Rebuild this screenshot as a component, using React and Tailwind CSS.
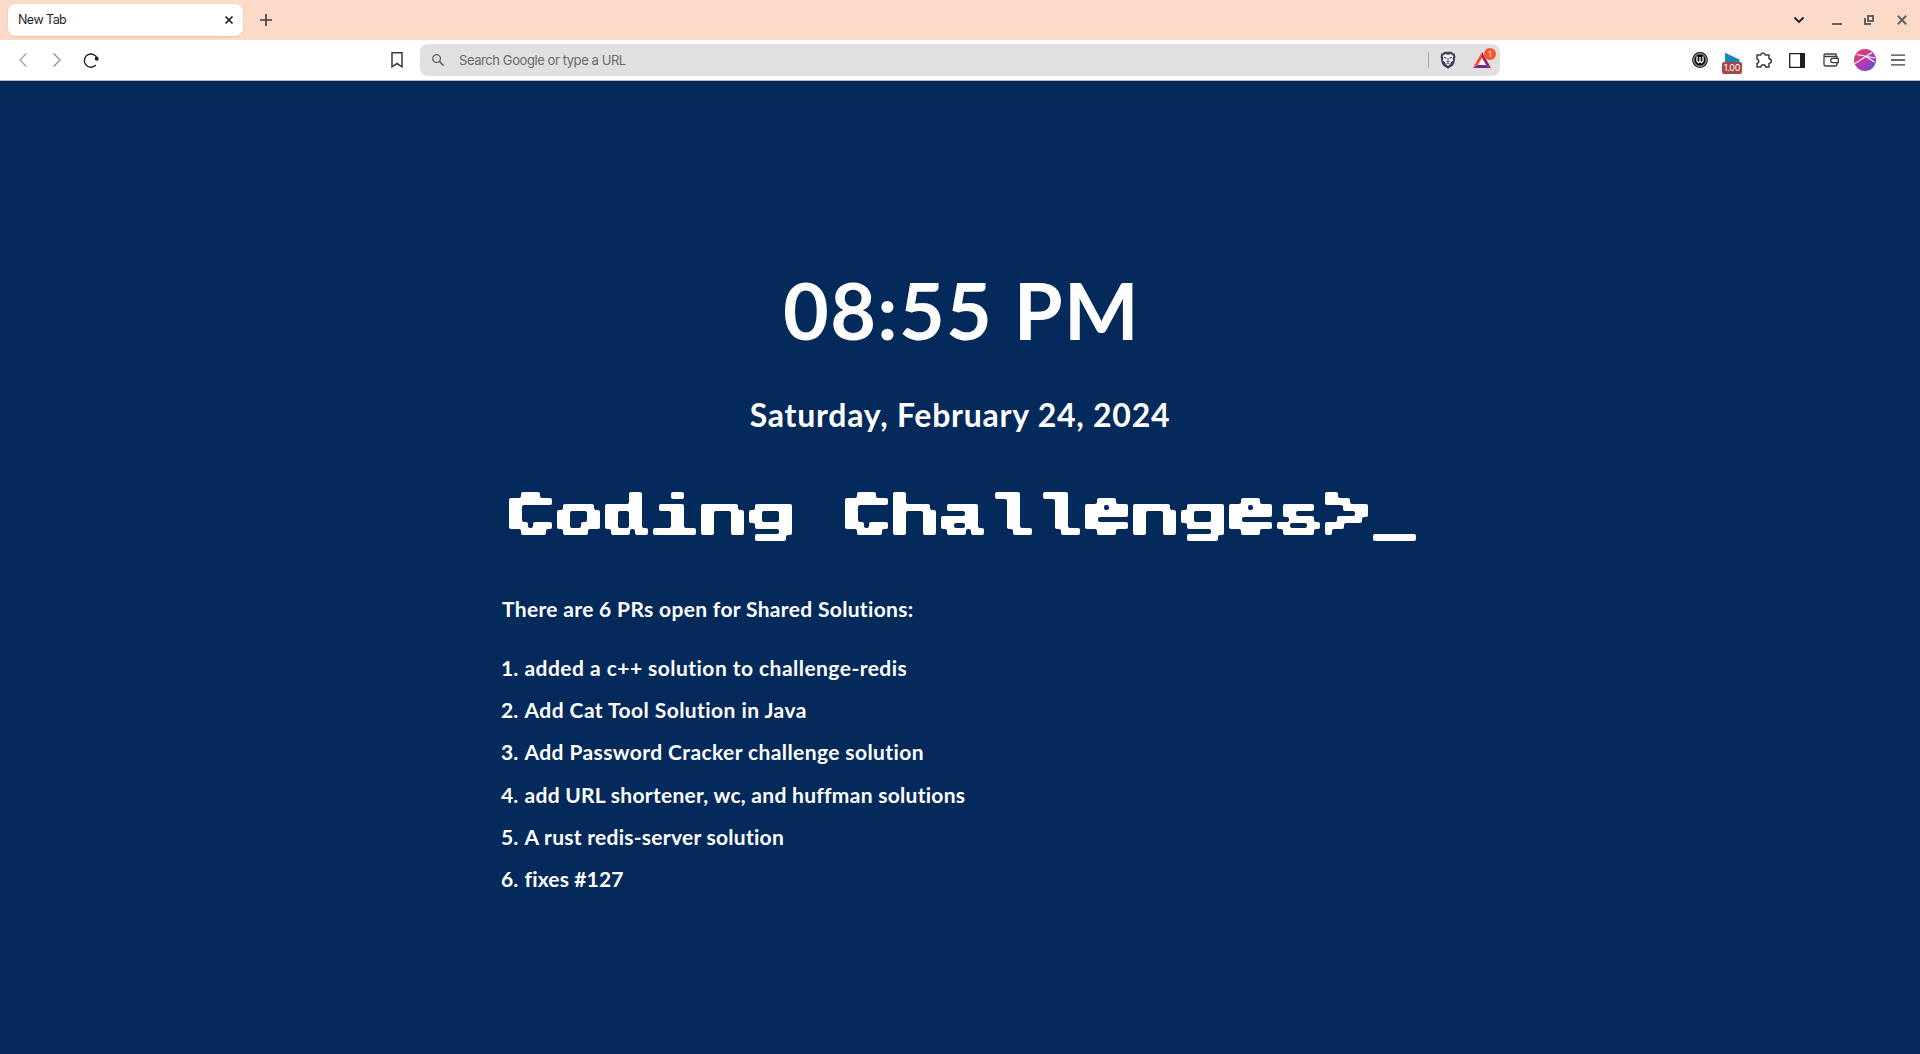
import React from "react";

const LINES = [
  ["added a c++ solution to challenge-redis", "tracking-[0.46px]"],
  ["Add Cat Tool Solution in Java", "tracking-[0.44px]"],
  ["Add Password Cracker challenge solution", "tracking-[0.4px]"],
  ["add URL shortener, wc, and huffman solutions", "tracking-[0.28px]"],
  ["A rust redis-server solution", "tracking-[0.27px]"],
  ["fixes #127", "tracking-[0.15px]"],
];

// Per-character adjustments that keep the bitmap rendering of the title crisp.
const GLYPH_STYLES = {
  e: "inline-block -translate-y-[2px] text-[58px] leading-none tracking-[0px] [-webkit-text-stroke:2px_white]",
  s: "inline-block [-webkit-text-stroke:0px_white]",
  g: "inline-block origin-[50%_40%] scale-y-[0.88]",
  ">": "inline-block -translate-y-px scale-y-[1.3] [-webkit-text-stroke:0px_white]",
  _: "inline-block scale-x-[0.84]",
};

function Icon({ w = 20, h = 20, className = "", children }) {
  return (
    <svg width={w} height={h} viewBox={`0 0 ${w} ${h}`} fill="none" className={"shrink-0 " + className}>
      {children}
    </svg>
  );
}

function TabStrip() {
  return (
    <div className="flex h-10 items-center bg-[#fcdac8] pl-2">
      <div className="flex h-8 w-[235px] items-center justify-between rounded-lg bg-white pr-[9px] pl-[10px] shadow-[0_1px_2px_rgba(120,60,30,0.15)]">
        <span className="pt-px text-[12.5px] tracking-[-0.55px] text-[#1d1f25]">New Tab</span>
        <Icon w={10} h={10} className="text-[#1d1f25]">
          <path d="M1.5 1.5l7 7M8.5 1.5l-7 7" stroke="currentColor" strokeWidth="1.7" />
        </Icon>
      </div>
      <Icon w={14} h={14} className="ml-4">
        <path d="M7 1v12M1 7h12" stroke="#3b3b42" strokeWidth="1.6" />
      </Icon>
      <div className="ml-auto flex items-center pr-[13px]">
        <Icon w={12} h={12} className="mr-[27px]">
          <path d="M1.5 3.5L6 8l4.5-4.5" stroke="#1d1f25" strokeWidth="1.8" />
        </Icon>
        <Icon w={10} h={12} className="mr-[22px]">
          <path d="M0 10h10" stroke="#636161" strokeWidth="2" />
        </Icon>
        <Icon w={10} h={10} className="mr-[23px]">
          <path d="M4 1h5v5H4zM1 3v6h6" stroke="#636161" strokeWidth="2" />
        </Icon>
        <Icon w={10} h={10}>
          <path d="M.8.8l8.4 8.4M9.2.8L.8 9.2" stroke="#636161" strokeWidth="2" />
        </Icon>
      </div>
    </div>
  );
}

function Toolbar() {
  return (
    <div className="flex h-[41px] items-center border-b border-[#bcc0bd] bg-white">
      <Icon w={8} h={14} className="ml-[19px]">
        <path d="M7.3.5L1 7l6.3 6.5" stroke="#a3a3a6" strokeWidth="1.3" />
      </Icon>
      <Icon w={8} h={14} className="ml-[26px]">
        <path d="M.7.5L7 7 .7 13.5" stroke="#8f8f93" strokeWidth="1.3" />
      </Icon>
      <Icon w={17} h={17} className="ml-[22px]">
        <path d="M12.8 13.100a6.600 6.600 0 1 1 1.500-6.300" stroke="#1d1f25" strokeWidth="1.400" />
        <circle cx="13.700" cy="6.800" r="2" fill="#1d1f25" />
      </Icon>
      <Icon w={12} h={16} className="ml-[291px]">
        <path d="M1 .8h10v14l-5-3.3-5 3.3z" stroke="#3b3b42" strokeWidth="1.5" />
      </Icon>
      <div className="ml-[17px] flex h-8 w-[1080px] items-center rounded-lg bg-[#e0e0e0] pr-[4px] pl-3">
        <Icon w={12} h={12}>
          <circle cx="4.6" cy="4.6" r="3.9" stroke="#5f6064" strokeWidth="1.3" />
          <path d="M7.4 7.4l4.3 4.3" stroke="#5f6064" strokeWidth="1.5" />
        </Icon>
        <span className="ml-[15px] pt-px text-[13px] tracking-[-0.42px] text-[#68696d]">Search Google or type a URL</span>
        <div className="ml-auto h-4 w-px bg-[#ababad]" />
        <Icon w={16} h={18} className="ml-[11px]">
          <path d="M4.5.8h7l1.6 1.4 1.5.4.8 3-1 6.2L13 14.500l-5 3.300-5-3.300-1.400-2.700L.6 5.600l.8-3 1.500-.4z" fill="#3f4158" />
          <path d="M5 3l3 .7L11 3l2.300 2-.5 2.500.3 2-2 1.500-.8 2.200L8 14.700l-2.300-1.500L4.900 11l-2-1.500.3-2L2.700 5z" fill="#f2f2f2" />
          <path d="M4 6.300l2.700.8M12 6.300l-2.700.8M8 7v3M6.300 10.200L8 11l1.700-.8M6.300 12.800L8 12l1.700.8" stroke="#3f4158" strokeWidth=".9" />
        </Icon>
        <div className="relative ml-[17px] h-[22px] w-[23px]">
          <Icon w={18} h={16} className="absolute top-[3px] left-0">
            <path d="M9 0L0 16l5.200-3L9 6z" fill="#ff4724" />
            <path d="M9 0l9 16-5.200-3L9 6z" fill="#9e1f63" />
            <path d="M0 16h18l-5.200-3H5.200z" fill="#662d91" />
            <path d="M9 6l4 7H5z" fill="#fff" />
          </Icon>
          <span className="absolute -top-px right-0 flex size-3 items-center justify-center rounded-full bg-[#fb542b] text-[8px] text-white">1</span>
        </div>
      </div>
      <div className="ml-auto flex items-center pr-[15px]">
        <Icon w={16} h={16} className="mr-[14px]">
          <circle cx="8" cy="8" r="7.900" fill="#111" />
          <circle cx="8" cy="8" r="6.300" stroke="#ddd" strokeWidth=".9" />
          <path d="M5 4.500v4.800l1.500 1.400L8 9.300l1.500 1.400L11 9.300V4.500M8 5v4.500" stroke="#fff" strokeWidth="1.300" />
        </Icon>
        <div className="relative mr-[13px] h-[22px] w-5">
          <Icon w={16} h={11} className="absolute top-[3px] left-[3px]">
            <path d="M0 .8l14.500 6.700V10H0z" fill="#1188b8" />
          </Icon>
          <span className="absolute top-[12.5px] left-0 flex h-3 w-5 items-center justify-center rounded-[2px] bg-[#a94646] text-[9px] tracking-[-0.2px] text-white">1.00</span>
        </div>
        <Icon w={18} h={18} className="mr-[16px]">
          <path d="M2 4h3.600a2.400 2.400 0 0 1 4.700 0H14v3.800a2.300 2.300 0 0 1 0 4.600V16h-3.500a2.300 2.300 0 0 0-4.600 0H2v-3.600a2.300 2.300 0 0 0 0-4.500z" stroke="#3b3b42" strokeWidth="1.500" strokeLinejoin="round" />
        </Icon>
        <Icon w={16} h={15} className="mr-[18px]">
          <path d="M.7.7h14.600v13.600H.7z" stroke="#1d1f25" strokeWidth="1.300" />
          <path d="M11 0h5v15h-5z" fill="#1d1f25" />
        </Icon>
        <Icon w={16} h={14} className="mr-[15px]">
          <path d="M1 3.500V11q0 2 2 2h9q2 0 2-2v-1M14 5.500v-2H2.500Q1 3.500 1 2.200T2.500 1H13v2.500" stroke="#3b3b42" strokeWidth="1.300" />
          <path d="M15.300 5.300h-5.500a2.200 2.200 0 0 0 0 4.400h5.500z" stroke="#3b3b42" strokeWidth="1.300" />
        </Icon>
        <Icon w={22} h={22} className="mr-[15px]">
          <defs>
            <linearGradient id="avatar" x1="0" y1="0" x2="1" y2="1">
              <stop offset=".15" stopColor="#e93c70" />
              <stop offset=".55" stopColor="#b23bb0" />
              <stop offset="1" stopColor="#4b55d8" />
            </linearGradient>
          </defs>
          <circle cx="11" cy="11" r="11" fill="url(#avatar)" />
          <path d="M1 14.500L18 3.500M3 5.500L21 9M12 7.500L20.500 13" stroke="#fff" strokeWidth="1.100" />
        </Icon>
        <Icon w={14} h={12}>
          <path d="M0 1.200h14M0 6h14M0 10.800h14" stroke="#3b3b42" strokeWidth="1.300" />
        </Icon>
      </div>
    </div>
  );
}

export default function App() {
  return (
    <div className="flex h-screen flex-col overflow-hidden bg-[#042a5c] font-['Inter',sans-serif]">
      <TabStrip />
      <Toolbar />
      <svg width="0" height="0" className="absolute">
        <filter id="pixelate" x="0" y="0" width="924" height="96" filterUnits="userSpaceOnUse" colorInterpolationFilters="sRGB">
          <feFlood x="3" y="3" width="1" height="1" floodColor="#fff" />
          <feComposite width="6" height="6" />
          <feTile result="grid" />
          <feComposite in="SourceGraphic" in2="grid" operator="in" />
          <feComponentTransfer>
            <feFuncR type="discrete" tableValues="1 1" />
            <feFuncG type="discrete" tableValues="1 1" />
            <feFuncB type="discrete" tableValues="1 1" />
            <feFuncA type="discrete" tableValues="0 1" />
          </feComponentTransfer>
          <feMorphology operator="dilate" radius="3" />
          <feGaussianBlur stdDeviation="1.2" />
          <feComponentTransfer>
            <feFuncA type="linear" slope="3" intercept="-1" />
          </feComponentTransfer>
        </filter>
      </svg>
      <main className="mx-auto flex w-[918px] flex-col font-['Lato',sans-serif] font-bold text-white">
        <h1 className="mt-[179px] h-[100px] pl-[3px] text-center text-[79px] leading-[100px] tracking-[1.3px] whitespace-nowrap">08:55 PM</h1>
        <h2 className="mt-[35px] h-10 text-center text-[32px] leading-10 tracking-[0.75px] whitespace-nowrap">Saturday, February 24, 2024</h2>
        <div className="mt-[33px] ml-[2px] h-24 w-[924px] [filter:url(#pixelate)]">
          <div className="ml-[3px] h-24 w-max origin-left scale-x-[1.379] pt-[2px] font-['Liberation_Mono',monospace] text-[57.5px] leading-[96px] font-bold tracking-[0.3px] whitespace-nowrap [-webkit-text-stroke:0.8px_white]">
            {"Coding Challenges>_".split("").map((ch, i) => (
              <span key={i} className={GLYPH_STYLES[ch]}>
                {ch}
              </span>
            ))}
          </div>
        </div>
        <p className="mt-[24px] h-[42px] pl-px text-[21px] leading-[42px] tracking-[0.33px] whitespace-nowrap">There are 6 PRs open for Shared Solutions:</p>
        <ol className="mt-[17px]">
          {LINES.map(([text, track], i) => (
            <li key={text} className="flex h-[42.2px] text-[21px] leading-[42px] whitespace-nowrap">
              <span className="w-[23.5px]">{i + 1}.</span>
              <span className={track}>{text}</span>
            </li>
          ))}
        </ol>
      </main>
    </div>
  );
}
